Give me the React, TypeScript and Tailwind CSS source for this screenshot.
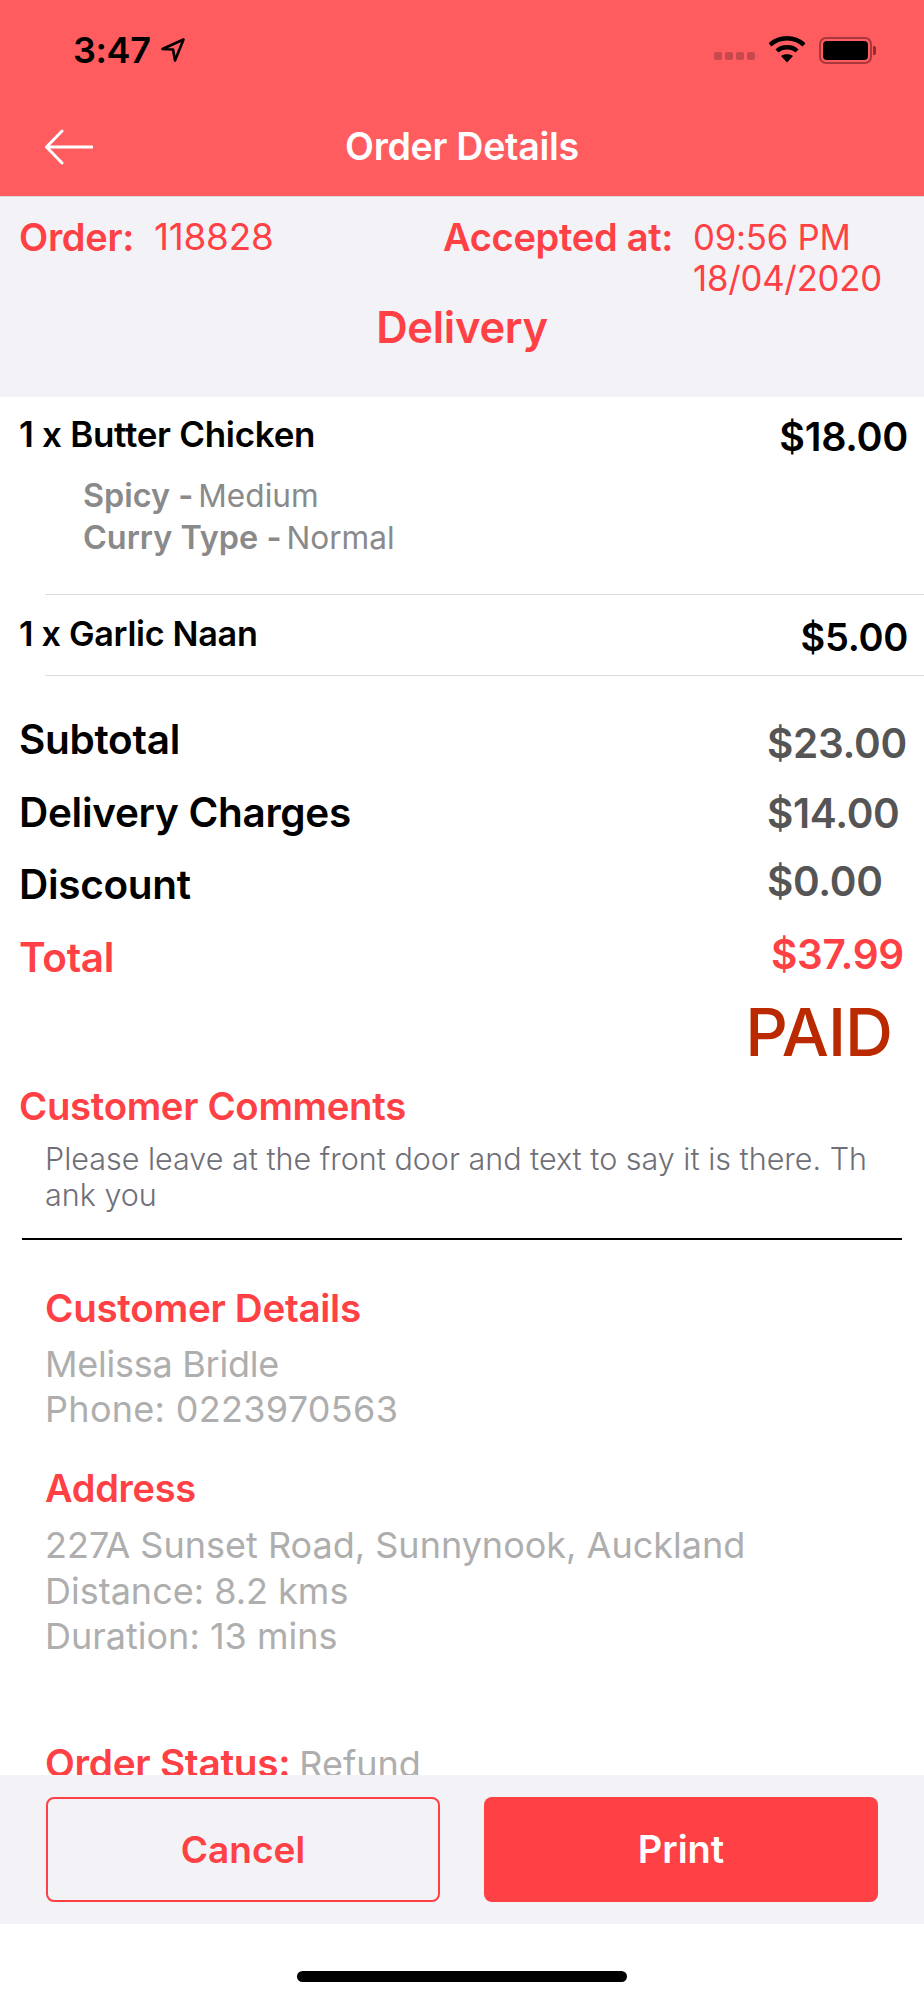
import React from "react";

const font = { fontFamily: "Inter, 'Liberation Sans', sans-serif" };

function Status() {
  return (
    <div className="h-[100px] flex items-start justify-between pl-[73px] pr-[48px]">
      <div className="flex items-center mt-[32px] h-[36px]">
        <span className="text-[36px] leading-[36px] font-semibold text-black tracking-[-0.4px]">3:47</span>
        <svg width="24" height="24" viewBox="0 0 24 24" className="ml-[10px]" fill="none">
          <path d="M1.5 11 L22.5 1.5 L14 22.5 L12 11.5 Z" stroke="#000" strokeWidth="2.6" strokeLinejoin="round" />
        </svg>
      </div>
      <div className="flex items-center mt-[36px] h-[28px]">
        <div className="flex gap-[3px] mt-[12px]">
          {[0, 1, 2, 3].map((i) => (
            <div key={i} className="w-[8px] h-[8px] rounded-[2px] bg-[#c7494d]" />
          ))}
        </div>
        <svg width="36" height="28" viewBox="0 0 36 28" className="ml-[14px]" fill="none">
          <path d="M1 9 C10 0 26 0 35 9" stroke="#000" strokeWidth="4.5" />
          <path d="M8 15 C13 10 23 10 28 15" stroke="#000" strokeWidth="4.5" />
          <path d="M12 20 L18 26.5 L24 20 C21 17.5 15 17.5 12 20 Z" fill="#000" />
        </svg>
        <div className="ml-[14px] flex items-center">
          <div className="w-[53px] h-[27px] rounded-[7px] border-[2px] border-[#a8383c] p-[2px]">
            <div className="w-full h-full rounded-[4px] bg-black" />
          </div>
          <div className="w-[3px] h-[9px] ml-[1px] rounded-r-[2px] bg-[#8f2f32]" />
        </div>
      </div>
    </div>
  );
}

function Item({ name, price, nameCls, priceCls }: { name: string; price: string; nameCls: string; priceCls: string }) {
  return (
    <div className="flex justify-between items-start pl-[19px] pr-[16px] h-[44px]">
      <span className={`leading-[36px] font-semibold text-black ${nameCls}`}>{name}</span>
      <span className={`leading-[40px] font-semibold text-black ${priceCls}`}>{price}</span>
    </div>
  );
}

function Total({ label, value, cls, red, w }: { label: string; value: string; cls: string; red?: boolean; w: string }) {
  return (
    <div className="flex justify-between items-start pl-[19px] pr-[19px] h-[72.5px]">
      <span className={`text-[40.5px] leading-[44px] font-semibold tracking-[-0.3px] whitespace-nowrap ${red ? "text-[#ff4044]" : "text-black"}`}>{label}</span>
      <span className={`text-[40.5px] leading-[44px] font-semibold tracking-[-0.3px] whitespace-nowrap ${red ? "text-[#ff4044]" : "text-[#555555]"} ${cls} ${w}`}>{value}</span>
    </div>
  );
}

export default function App() {
  return (
    <div style={font} className="w-[924px] h-[2000px] flex flex-col bg-white overflow-hidden">
      <div className="h-[197px] shrink-0 bg-[#ff5c5f] border-b border-[#d9d9d9]">
        <Status />
        <div className="flex items-center h-[94px] px-[45px]">
          <svg width="48" height="36" viewBox="0 0 48 36" fill="none" className="shrink-0">
            <path d="M17 2 L1.5 18 L17 34 M1.5 18 H47" stroke="#fff" strokeWidth="3" strokeLinecap="round" strokeLinejoin="round" />
          </svg>
          <span className="flex-1 text-center text-[37.6px] leading-[40px] font-semibold text-white tracking-[-0.3px]">Order Details</span>
          <div className="w-[48px] shrink-0" />
        </div>
      </div>

      <div className="h-[200px] shrink-0 bg-[#f2f2f7] pt-[20px] text-[#ff4044]">
        <div className="flex items-start pl-[19px]">
          <span className="w-[135px] text-[38px] leading-[40px] font-semibold tracking-[-0.3px]">Order:</span>
          <span className="w-[289px] text-[36.8px] leading-[40px] tracking-[-0.2px]">118828</span>
          <span className="w-[250px] text-[38px] leading-[40px] font-semibold tracking-[-0.3px] whitespace-nowrap">Accepted at:</span>
          <div className="text-[34.7px] leading-[41px] tracking-[-0.2px] whitespace-nowrap">
            <div>09:56 PM</div>
            <div>18/04/2020</div>
          </div>
        </div>
        <div className="text-center text-[43.5px] leading-[50px] font-semibold tracking-[-0.3px] mt-[3px]">Delivery</div>
      </div>

      <div className="flex-1 overflow-hidden bg-white">
        <div className="pt-[17px] h-[197px]">
          <Item name="1 x Butter Chicken" price="$18.00" nameCls="text-[35px] tracking-[-0.3px] mt-[2px]" priceCls="text-[39.5px] tracking-[-0.3px] mt-[3px]" />
          <div className="pl-[83px] pt-[17px] text-[31.6px] leading-[42px] text-[#8a8a8a] whitespace-nowrap">
            <div>
              <span className="font-semibold text-[32.4px]">Spicy -</span>
              <span className="ml-[5px]">Medium</span>
            </div>
            <div>
              <span className="font-semibold text-[32.4px]">Curry Type -</span>
              <span className="ml-[5px]">Normal</span>
            </div>
          </div>
        </div>
        <div className="ml-[45px] h-[1px] bg-[#dcdcdc]" />
        <div className="pt-[20px] h-[80px]">
          <Item name="1 x Garlic Naan" price="$5.00" nameCls="text-[34.2px] tracking-[-0.3px] mt-[1px]" priceCls="text-[38px] tracking-[-0.3px] mt-[2px]" />
        </div>
        <div className="ml-[45px] h-[1px] bg-[#dcdcdc]" />

        <div className="pt-[42px]">
          <Total label="Subtotal" value="$23.00" cls="mt-[4px]" w="w-[138px]" />
          <Total label="Delivery Charges" value="$14.00" cls="mt-[1px]" w="w-[138px]" />
          <Total label="Discount" value="$0.00" cls="-mt-[3px]" w="w-[138px]" />
          <Total label="Total" value="$37.99" red cls="-mt-[3px]" w="w-[134px]" />
        </div>

        <div className="flex justify-end pr-[32px] -mt-[15px] h-[78px]">
          <span className="text-[66.5px] leading-[78px] font-medium text-[#ba2900] tracking-[-1px]">PAID</span>
        </div>

        <div className="pl-[19px] text-[38.3px] leading-[44px] font-semibold text-[#ff4044] tracking-[-0.3px] mt-[13px]">Customer Comments</div>
        <div className="pl-[45px] pt-[13px] text-[30.5px] leading-[36px] font-light text-[#6f6f78] whitespace-nowrap">
          Please leave at the front door and text to say it is there. Th
          <br />
          ank you
        </div>
        <div className="ml-[22px] w-[880px] h-[2px] bg-black mt-[25px]" />

        <div className="pl-[45px] pt-[46px]">
          <div className="text-[38.6px] leading-[44px] font-semibold text-[#ff4044] tracking-[-0.3px]">Customer Details</div>
          <div className="mt-[12px] text-[36px] leading-[44.5px] text-[#aeaeae]">
            <div className="tracking-[-0.25px]">Melissa Bridle</div>
            <div className="tracking-[0.3px]">Phone: 0223970563</div>
          </div>
          <div className="mt-[35px] text-[38px] leading-[44px] font-semibold text-[#ff4044] tracking-[-0.3px]">Address</div>
          <div className="mt-[13px] text-[36px] leading-[45.5px] text-[#aeaeae] whitespace-nowrap">
            <div>227A Sunset Road, Sunnynook, Auckland</div>
            <div>Distance: 8.2 kms</div>
            <div>Duration: 13 mins</div>
          </div>
          <div className="mt-[81px] text-[36px] leading-[44px] text-[#aeaeae] whitespace-nowrap">
            <span className="text-[38.8px] font-semibold text-[#ff4044] tracking-[-0.3px]">Order Status:</span>
            <span className="ml-[9px]">Refund</span>
          </div>
        </div>
      </div>

      <div className="h-[149px] shrink-0 bg-[#f2f2f7] flex gap-[44px] pl-[46px] pt-[22px]">
        <button className="w-[394px] h-[105px] rounded-[8px] border-[2px] border-[#ff4044] text-[#ff4044] text-[37px] font-semibold">Cancel</button>
        <button className="w-[394px] h-[105px] rounded-[8px] bg-[#ff4044] text-white text-[38px] font-semibold">Print</button>
      </div>

      <div className="h-[76px] shrink-0 bg-white flex justify-center pt-[47px]">
        <div className="w-[330px] h-[11px] rounded-full bg-black" />
      </div>
    </div>
  );
}
